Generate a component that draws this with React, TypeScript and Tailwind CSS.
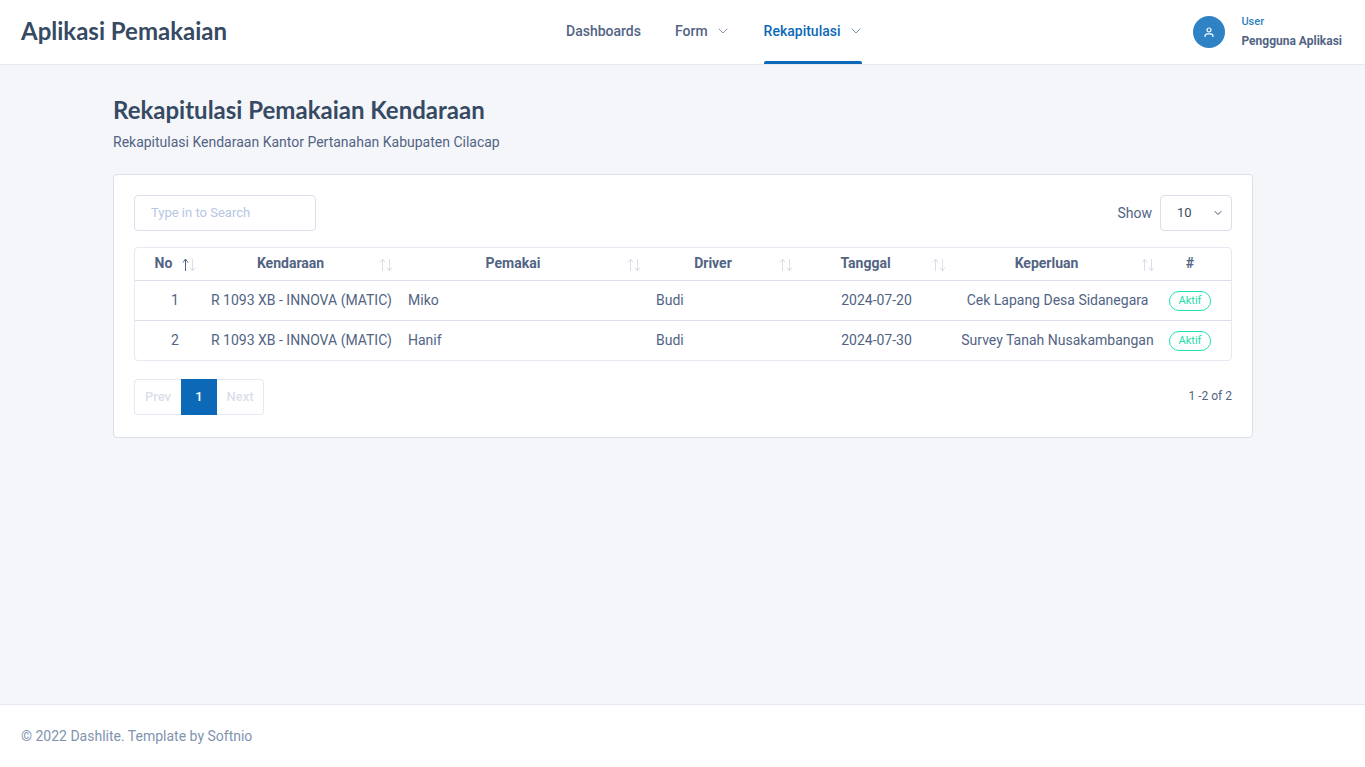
import { ChevronDown } from "lucide-react";

const SortIcon = ({ active }: { active?: boolean }) => (
  <svg width="14" height="14" viewBox="0 0 14 14" fill="none" strokeWidth="1" className="absolute right-[7px] top-[10px]">
    <path d="M3.5 13V1.5M1 4.5 3.5 1 6 4.5" stroke={active ? "#526484" : "#dbdfea"} />
    <path d="M10.5 1V12.5M8 9.5 10.5 13 13 9.5" stroke="#dbdfea" />
  </svg>
);

const heads = [
  { label: "Kendaraan", w: "w-[197px]" },
  { label: "Pemakai", w: "w-[248px]" },
  { label: "Driver", w: "w-[152px]" },
  { label: "Tanggal", w: "w-[153px]" },
  { label: "Keperluan", w: "w-[209px]" },
];

const rows = [
  { no: 1, kendaraan: "R 1093 XB - INNOVA (MATIC)", pemakai: "Miko", driver: "Budi", tanggal: "2024-07-20", keperluan: "Cek Lapang Desa Sidanegara" },
  { no: 2, kendaraan: "R 1093 XB - INNOVA (MATIC)", pemakai: "Hanif", driver: "Budi", tanggal: "2024-07-30", keperluan: "Survey Tanah Nusakambangan" },
];

const App = () => {
  return (
    <div className="min-h-screen flex flex-col bg-[#f5f6fa] text-[14px] text-[#526484] font-['Roboto',sans-serif]">
      <header className="h-[65px] bg-white border-b border-[#e5e9f2] flex items-center pl-[21px] pr-[23px]">
        <div className="w-[545px] pb-[2px] text-[24px] font-bold text-[#364a63] font-['Lato',sans-serif] leading-none">
          Aplikasi Pemakaian
        </div>
        <nav className="flex h-full font-medium">
          <a className="flex items-center pb-[2px] mr-[34px]">Dashboards</a>
          <a className="flex items-center pb-[2px] mr-[35px]">
            Form
            <ChevronDown size={16} strokeWidth={1.5} className="ml-[7px] -mr-[2px] text-[#8094ae]" />
          </a>
          <a className="relative flex items-center pb-[2px] text-[#0b69b7]">
            Rekapitulasi
            <ChevronDown size={16} strokeWidth={1.5} className="ml-[7px] -mr-[2px] text-[#8094ae]" />
            <span className="absolute left-0 right-0 bottom-0 h-[3px] rounded-t-[2px] bg-[#0b69b7]"></span>
          </a>
        </nav>
        <div className="ml-auto flex items-center">
          <div className="w-8 h-8 rounded-full bg-[#2f82c3] flex items-center justify-center mr-[16px]">
            <svg width="10" height="11" viewBox="0 0 10 11" fill="none" stroke="white" strokeWidth="1.2">
              <circle cx="5" cy="3" r="2" />
              <path d="M1 10V9.3C1 7.8 2.2 6.8 3.5 6.8H6.5C7.8 6.8 9 7.8 9 9.3V10" />
            </svg>
          </div>
          <div className="flex flex-col pt-[2px]">
            <span className="text-[11px] font-medium leading-[17px] text-[#2f82c3]">User</span>
            <span className="text-[12px] font-bold leading-[23px] text-[#526484]">Pengguna Aplikasi</span>
          </div>
        </div>
      </header>

      <main className="flex-1 w-[1140px] ml-[113px] pt-[28px]">
        <h3 className="text-[24px] leading-[33px] font-bold text-[#364a63] font-['Lato',sans-serif]">
          Rekapitulasi Pemakaian Kendaraan
        </h3>
        <p className="mt-[5px] leading-[23px]">Rekapitulasi Kendaraan Kantor Pertanahan Kabupaten Cilacap</p>

        <div className="mt-[20px] bg-white border border-[#dbdfea] rounded-[4px] px-5 pt-5 pb-[22px]">
          <div className="flex items-center justify-between">
            <input
              placeholder="Type in to Search"
              className="w-[182px] h-9 px-4 pb-[2px] border border-[#dbdfea] rounded-[4px] text-[13px] outline-none placeholder:text-[#b7c6e3]"
            />
            <div className="flex items-center">
              <span className="mr-2">Show</span>
              <div className="w-[72px] h-9 border border-[#dbdfea] rounded-[4px] flex items-center justify-between pl-4 pr-[7px] text-[13px] text-[#3c4d62]">
                10
                <ChevronDown size={12} strokeWidth={2} className="text-[#3c4d62]" />
              </div>
            </div>
          </div>

          <div className="mt-4 border border-[#e5e9f2] rounded-[4px]">
            <table className="w-full table-fixed border-collapse">
              <thead>
                <tr className="h-[32px] border-b border-[#dbdfea] font-bold">
                  <th className="relative w-[68px] pr-[22px] pl-[11px] text-center font-bold">
                    No
                    <SortIcon active />
                  </th>
                  {heads.map((h) => (
                    <th key={h.label} className={`relative ${h.w} pr-[30px] pl-2 text-center font-bold`}>
                      {h.label}
                      <SortIcon />
                    </th>
                  ))}
                  <th className="pr-[13px] text-center font-bold">#</th>
                </tr>
              </thead>
              <tbody>
                {rows.map((r, i) => (
                  <tr key={r.no} className={`h-10 ${i === 0 ? "border-b border-[#dbdfea]" : ""}`}>
                    <td className="pl-3 text-center">{r.no}</td>
                    <td className="px-2 whitespace-nowrap">{r.kendaraan}</td>
                    <td className="px-2">{r.pemakai}</td>
                    <td className="px-2">{r.driver}</td>
                    <td className="px-2 text-center">{r.tanggal}</td>
                    <td className="px-2 text-center whitespace-nowrap">{r.keperluan}</td>
                    <td className="pr-[13px] text-center">
                      <span className="inline-flex items-center justify-center w-[42px] h-5 border border-[#1ee0ac] rounded-full text-[11px] text-[#1ee0ac]">
                        Aktif
                      </span>
                    </td>
                  </tr>
                ))}
              </tbody>
            </table>
          </div>

          <div className="mt-[18px] flex items-center justify-between">
            <div className="flex h-9 text-[13px] text-[#dbdfea] font-medium">
              <span className="w-[47px] flex items-center justify-center border border-r-0 border-[#e5e9f2] rounded-l-[4px]">Prev</span>
              <span className="w-9 flex items-center justify-center bg-[#0b69b7] text-white">1</span>
              <span className="w-[47px] flex items-center justify-center border border-l-0 border-[#e5e9f2] rounded-r-[4px]">Next</span>
            </div>
            <span className="pb-[2px] text-[12px]">1 -2 of 2</span>
          </div>
        </div>
      </main>

      <footer className="h-[63px] bg-white border-t border-[#e5e9f2] flex items-center px-[21px] text-[#8094ae]">
        © 2022 Dashlite. Template by Softnio
      </footer>
    </div>
  );
};

export default App;
